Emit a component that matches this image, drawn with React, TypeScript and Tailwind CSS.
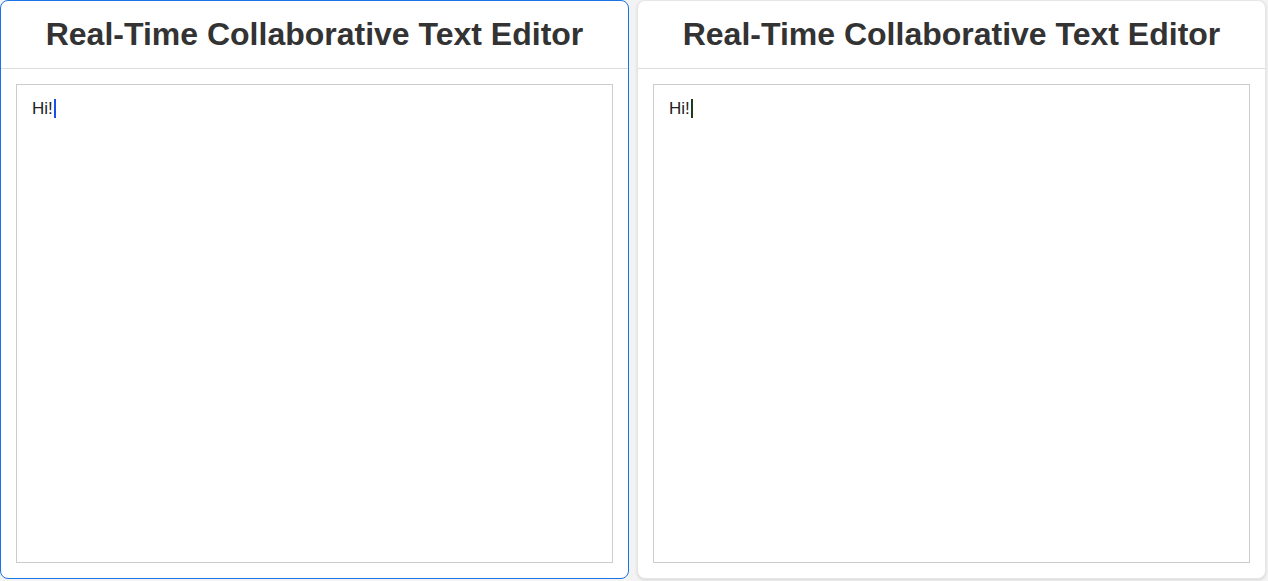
import React from "react";

function Panel({ active }: { active?: boolean }) {
  return (
    <div
      className={
        "w-[629px] flex flex-col bg-white rounded-lg " +
        (active
          ? "border border-[#1a73e8]"
          : "border border-[#e6e6e6] shadow-[0_1px_3px_rgba(0,0,0,0.12)]")
      }
    >
      <div className="h-[68px] shrink-0 flex items-center justify-center border-b border-[#dddddd] pb-[2px]">
        <h1 className="text-[32px] font-bold text-[#333333] leading-none">
          Real-Time Collaborative Text Editor
        </h1>
      </div>
      <div className="flex-1 flex p-[15px]">
        <div className="flex-1 border border-[#cccccc] px-[15px] py-[14px] text-[17px] text-[#222222] leading-[20px]">
          Hi!
          <span
            className={
              "inline-block w-[2px] h-[19px] align-[-4px] ml-[1px] " +
              (active ? "bg-[#1a4fe8]" : "bg-[#1f3a1f]")
            }
          />
        </div>
      </div>
    </div>
  );
}

export default function App() {
  return (
    <div
      className="h-[581px] w-[1268px] bg-[#f3f3f3] flex gap-[8px] pb-[2px]"
      style={{ fontFamily: '"Liberation Sans", Arial, sans-serif' }}
    >
      <Panel active />
      <Panel />
    </div>
  );
}
